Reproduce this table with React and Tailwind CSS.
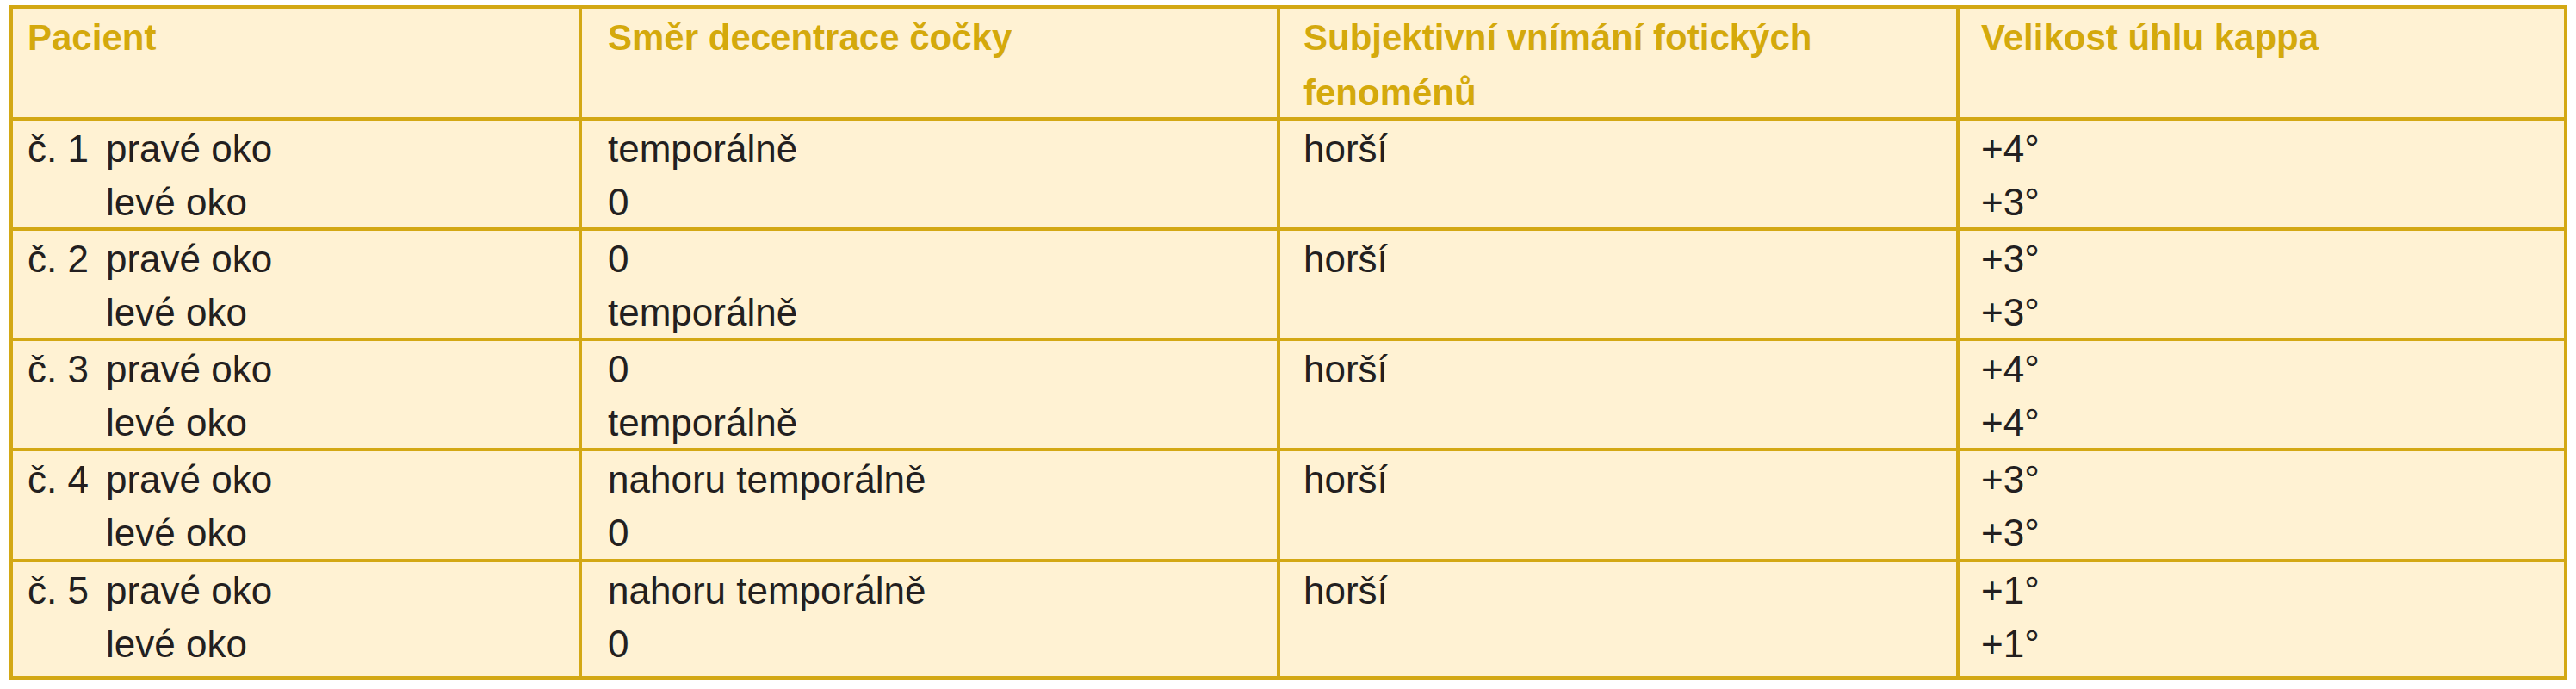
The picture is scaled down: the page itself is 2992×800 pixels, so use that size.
const rows = [
  { no: "č. 1", dir: ["temporálně", "0"], kappa: ["+4°", "+3°"] },
  { no: "č. 2", dir: ["0", "temporálně"], kappa: ["+3°", "+3°"] },
  { no: "č. 3", dir: ["0", "temporálně"], kappa: ["+4°", "+4°"] },
  { no: "č. 4", dir: ["nahoru temporálně", "0"], kappa: ["+3°", "+3°"] },
  { no: "č. 5", dir: ["nahoru temporálně", "0"], kappa: ["+1°", "+1°"] },
];

const font = "font-['Liberation_Sans',Arial,sans-serif]";
const head = "border-b-4 border-[#d3a814] pt-[2px] text-[42px] leading-[64px] font-bold text-[#d4a90c]";
const body = "border-[#d3a814] pt-[2px] text-[44px] leading-[62px] text-[#231f20]";

const App = () => {
  return (
    <div className={`min-h-screen bg-white pt-[6px] pl-[11px] ${font}`}>
      <div className="w-fit border-4 border-[#d3a814] bg-[#fff2d3] grid grid-cols-[661px_811px_789px_702px] grid-rows-[130px_128px_128px_128px_129px_132px]">
        <div className={`${head} border-r-4 pl-[17px]`}>Pacient</div>
        <div className={`${head} border-r-4 pl-[30px]`}>Směr decentrace čočky</div>
        <div className={`${head} border-r-4 pl-[27px]`}>
          Subjektivní vnímání fotických
          <br />
          fenoménů
        </div>
        <div className={`${head} pl-[25px]`}>Velikost úhlu kappa</div>

        {rows.map((r, i) => {
          const last = i === rows.length - 1;
          const b = last ? "" : "border-b-4";
          return [
            <div key={`p${i}`} className={`${body} ${b} border-r-4 pl-[17px]`}>
              <div className="flex">
                <span className="w-[91px] shrink-0">{r.no}</span>
                <span>pravé oko</span>
              </div>
              <div className="pl-[91px]">levé oko</div>
            </div>,
            <div key={`d${i}`} className={`${body} ${b} border-r-4 pl-[30px]`}>
              <div>{r.dir[0]}</div>
              <div>{r.dir[1]}</div>
            </div>,
            <div key={`s${i}`} className={`${body} ${b} border-r-4 pl-[27px]`}>
              horší
            </div>,
            <div key={`k${i}`} className={`${body} ${b} pl-[25px]`}>
              <div>{r.kappa[0]}</div>
              <div>{r.kappa[1]}</div>
            </div>,
          ];
        })}
      </div>
    </div>
  );
};

export default App;
